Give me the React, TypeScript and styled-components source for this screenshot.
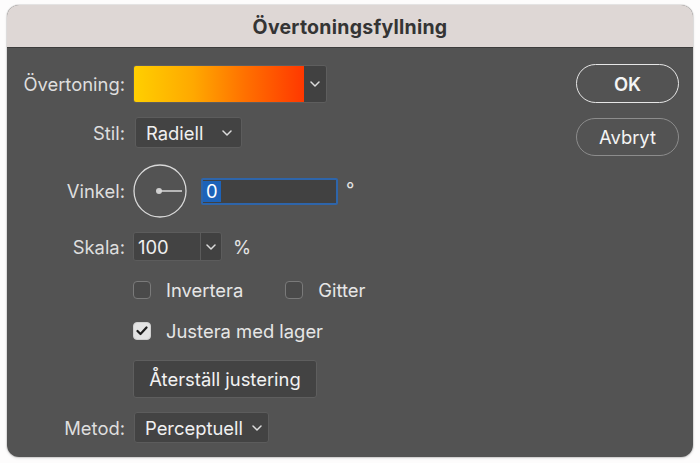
import React from "react";
import styled, { createGlobalStyle, css } from "styled-components";

const Global = createGlobalStyle`
  html, body { margin: 0; padding: 0; background: #fdfcfc; }
  body { font-family: Inter, "Liberation Sans", Arial, sans-serif; }
  * { box-sizing: border-box; }
`;

const FS = 18.4;

const Page = styled.div`
  width: 700px;
  height: 463px;
  padding: 5px 7px 5px 7px;
`;

const Window = styled.div`
  width: 686px;
  height: 452px;
  border-radius: 12px;
  overflow: hidden;
  background: #535353;
  display: flex;
  flex-direction: column;
  box-shadow: 0 0 0 1px rgba(0,0,0,0.08), 0 1px 3px rgba(0,0,0,0.15);
`;

const TitleBar = styled.div`
  height: 43px;
  flex: none;
  background: #ded7d5;
  border-bottom: 1px solid #3c3c3c;
  display: flex;
  align-items: center;
  justify-content: center;
  font-weight: 700;
  font-size: 19.5px;
  color: #343434;
  letter-spacing: 0.25px;
  padding-top: 1px;
`;

const Body = styled.div`
  flex: 1;
  display: flex;
  justify-content: space-between;
  padding: 16px 14px 0 0;
`;

const Form = styled.div`
  display: flex;
  flex-direction: column;
`;

const Row = styled.div<{ $mt?: number }>`
  display: grid;
  grid-template-columns: 118px auto;
  column-gap: 8px;
  align-items: center;
  margin-top: ${(p) => p.$mt ?? 0}px;
`;

const Label = styled.div`
  text-align: right;
  color: #dedede;
  font-size: ${FS}px;
`;

const Controls = styled.div`
  display: flex;
  align-items: center;
`;

const GradientBox = styled.div`
  display: flex;
  width: 194px;
  height: 38px;
  border: 1px solid #5e5e5e;
  border-radius: 3px;
  overflow: hidden;
`;

const Swatch = styled.div`
  flex: 1;
  background: linear-gradient(to right, #ffcf00 0%, #ffa800 35%, #ff7100 65%, #ff3800 100%);
`;

const DropPart = styled.div<{ $w: number; $divider?: boolean }>`
  width: ${(p) => p.$w}px;
  flex: none;
  background: #414141;
  display: flex;
  align-items: center;
  justify-content: center;
  ${(p) => p.$divider && css`border-left: 1px solid #5b5b5b;`}
`;

const Select = styled.div<{ $w: number; $h: number; $ml?: number; $pr?: number }>`
  width: ${(p) => p.$w}px;
  height: ${(p) => p.$h}px;
  margin-left: ${(p) => p.$ml ?? 0}px;
  background: #434343;
  border: 1px solid #5c5c5c;
  border-radius: 3px;
  display: flex;
  align-items: center;
  justify-content: space-between;
  padding: 0 ${(p) => p.$pr ?? 9}px 0 10px;
  color: #f0f0f0;
  font-size: ${FS}px;
`;

const Combo = styled.div`
  display: flex;
  width: 89px;
  height: 29px;
  border: 1px solid #5c5c5c;
  border-radius: 3px;
  overflow: hidden;
`;

const ComboText = styled.div`
  flex: 1;
  background: #434343;
  color: #f0f0f0;
  font-size: ${FS}px;
  display: flex;
  align-items: center;
  padding-left: 4px;
`;

const AngleInput = styled.div`
  width: 137px;
  height: 27px;
  background: #414141;
  border: 2px solid #2e65aa;
  border-radius: 2px;
  display: flex;
  align-items: center;
  margin-left: 14px;
`;

const Selected = styled.span`
  background: #1d63b9;
  color: #ffffff;
  font-size: ${FS}px;
  line-height: 21px;
  padding: 0 3px;
`;

const Unit = styled.span<{ $ml: number; $up?: number }>`
  color: #e4e4e4;
  font-size: ${FS}px;
  margin-left: ${(p) => p.$ml}px;
  position: relative;
  top: ${(p) => -(p.$up ?? 0)}px;
`;

const CheckWrap = styled.label<{ $ml?: number }>`
  display: flex;
  align-items: center;
  gap: 15px;
  margin-left: ${(p) => p.$ml ?? 0}px;
  color: #e6e6e6;
  font-size: ${FS}px;
`;

const Box = styled.span<{ $checked?: boolean }>`
  width: 18px;
  height: 18px;
  border-radius: 4px;
  display: inline-flex;
  align-items: center;
  justify-content: center;
  ${(p) =>
    p.$checked
      ? css`background: #e3e3e3; border: 1px solid #d0d0d0;`
      : css`background: #4a4a4a; border: 1px solid #7a7a7a;`}
`;

const PlainButton = styled.div`
  width: 184px;
  height: 38px;
  background: #434343;
  border: 1px solid #5e5e5e;
  border-radius: 3px;
  color: #f2f2f2;
  font-size: ${FS}px;
  display: flex;
  align-items: center;
  justify-content: center;
`;

const Side = styled.div`
  display: flex;
  flex-direction: column;
  gap: 15px;
`;

const Pill = styled.div<{ $primary?: boolean }>`
  width: 103px;
  height: 39px;
  border-radius: 20px;
  display: flex;
  align-items: center;
  justify-content: center;
  font-size: ${FS}px;
  color: #f4f4f4;
  ${(p) =>
    p.$primary
      ? css`border: 1.5px solid #e6e6e6; font-weight: 600;`
      : css`border: 1px solid #8c8c8c; height: 38px;`}
`;

const Chevron = () => (
  <svg width="10" height="6" viewBox="0 0 10 6">
    <polyline points="1,1 5,5 9,1" fill="none" stroke="#dcdcdc" strokeWidth="1.5" strokeLinecap="round" strokeLinejoin="round" />
  </svg>
);

const Dial = () => (
  <svg width="54" height="54" viewBox="0 0 54 54">
    <circle cx="27" cy="27" r="26" fill="none" stroke="#d8d8d8" strokeWidth="1.3" />
    <circle cx="26" cy="27" r="3" fill="#cfcfcf" />
    <line x1="26" y1="27" x2="49" y2="27" stroke="#d8d8d8" strokeWidth="1.5" />
  </svg>
);

const Check = () => (
  <svg width="12" height="10" viewBox="0 0 12 10">
    <polyline points="1.5,5 4.5,8 10.5,1.5" fill="none" stroke="#1d1d1d" strokeWidth="2.2" strokeLinecap="round" strokeLinejoin="round" />
  </svg>
);

export default function App() {
  return (
    <Page>
      <Global />
      <Window>
        <TitleBar>Övertoningsfyllning</TitleBar>
        <Body>
          <Form>
            <Row $mt={1}>
              <Label>Övertoning:</Label>
              <GradientBox>
                <Swatch />
                <DropPart $w={22}>
                  <Chevron />
                </DropPart>
              </GradientBox>
            </Row>
            <Row $mt={14}>
              <Label>Stil:</Label>
              <Controls>
                <Select $w={107} $h={31} $ml={2}>
                  Radiell <Chevron />
                </Select>
              </Controls>
            </Row>
            <Row $mt={16}>
              <Label>Vinkel:</Label>
              <Controls>
                <Dial />
                <AngleInput>
                  <Selected>0</Selected>
                </AngleInput>
                <Unit $ml={8} $up={2}>°</Unit>
              </Controls>
            </Row>
            <Row $mt={14}>
              <Label>Skala:</Label>
              <Controls>
                <Combo>
                  <ComboText>100</ComboText>
                  <DropPart $w={21} $divider>
                    <Chevron />
                  </DropPart>
                </Combo>
                <Unit $ml={11}>%</Unit>
              </Controls>
            </Row>
            <Row $mt={18}>
              <span />
              <Controls>
                <CheckWrap>
                  <Box />
                  Invertera
                </CheckWrap>
                <CheckWrap $ml={42}>
                  <Box />
                  Gitter
                </CheckWrap>
              </Controls>
            </Row>
            <Row $mt={19}>
              <span />
              <Controls>
                <CheckWrap>
                  <Box $checked>
                    <Check />
                  </Box>
                  Justera med lager
                </CheckWrap>
              </Controls>
            </Row>
            <Row $mt={18}>
              <span />
              <Controls>
                <PlainButton>Återställ justering</PlainButton>
              </Controls>
            </Row>
            <Row $mt={14}>
              <Label>Metod:</Label>
              <Controls>
                <Select $w={135} $h={31} $ml={1} $pr={6}>
                  Perceptuell <Chevron />
                </Select>
              </Controls>
            </Row>
          </Form>
          <Side>
            <Pill $primary>OK</Pill>
            <Pill>Avbryt</Pill>
          </Side>
        </Body>
      </Window>
    </Page>
  );
}
